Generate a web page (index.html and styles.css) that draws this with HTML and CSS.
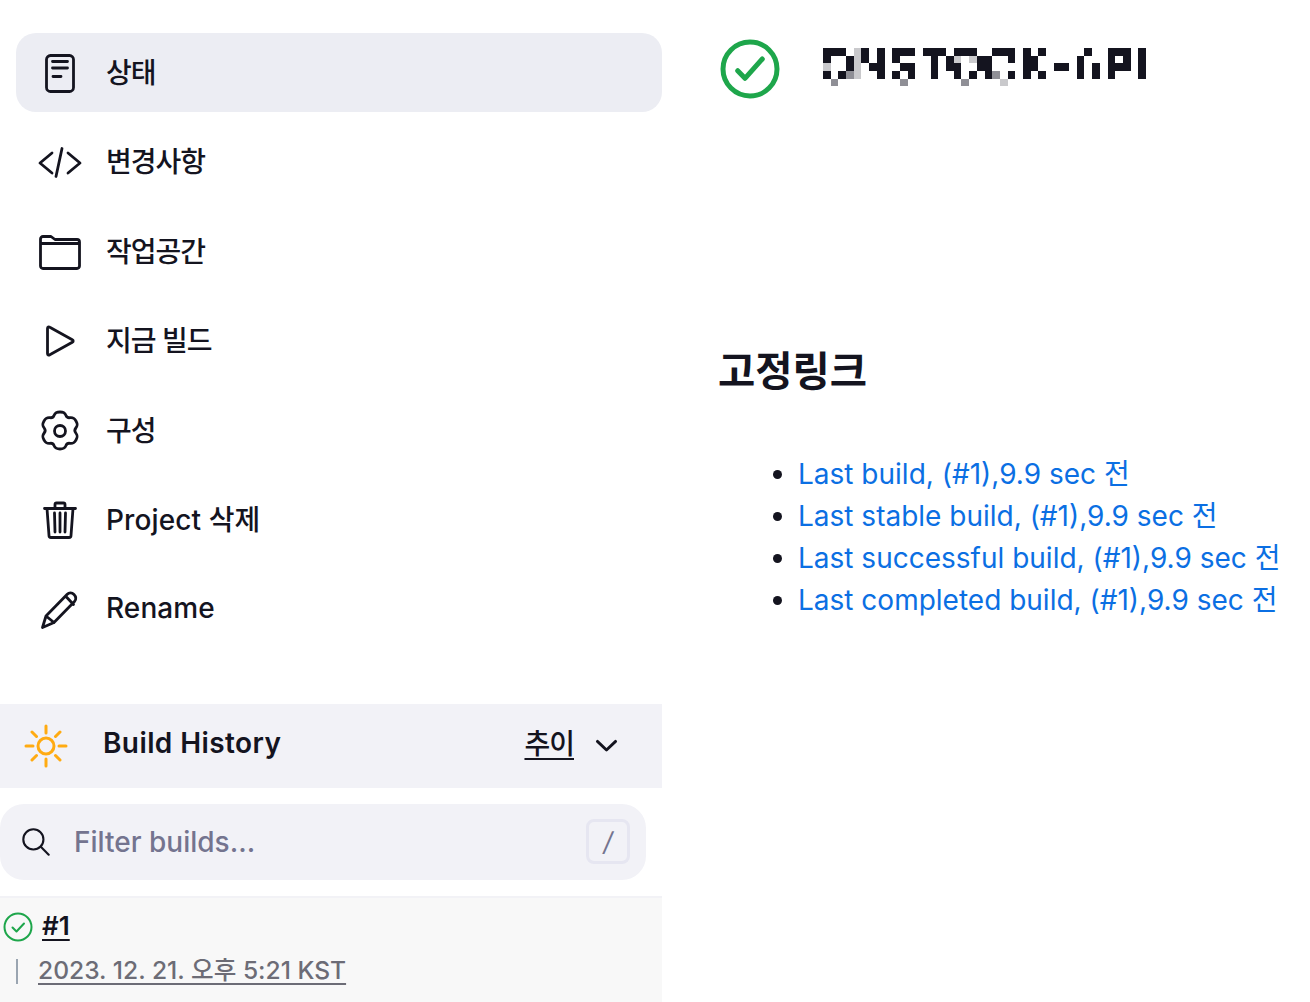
FILE: index.html
```html
<!DOCTYPE html>
<html lang="ko">
<head>
    <meta charset="UTF-8">
    <title>Project</title>
    <link rel="stylesheet" href="styles.css">
</head>
<body>
    <aside class="sidebar">
        <nav class="tasks">
            <a class="task task-ko task-active" href="#">
                <svg class="task-icon" viewBox="0 0 48 48"><rect x="10.500" y="6.500" width="27" height="36" rx="4"/><path d="M16.500 12.500h15M16.500 19h15M17 27.500h8"/></svg>
                <span>상태</span>
            </a>
            <a class="task task-ko" href="#">
                <svg class="task-icon" viewBox="0 0 48 48"><path d="M16 15 4 25l12 10M32 15l12 10-12 10M26 10.500 20 38.500"/></svg>
                <span>변경사항</span>
            </a>
            <a class="task task-ko" href="#">
                <svg class="task-icon" viewBox="0 0 48 48"><path d="M4.500 38V11a2.500 2.500 0 0 1 2.500-2.500h8l4 3h22a2.500 2.500 0 0 1 2.500 2.500v24a2.500 2.500 0 0 1-2.500 2.500H7A2.500 2.500 0 0 1 4.500 38ZM4.500 15.500h39"/></svg>
                <span>작업공간</span>
            </a>
            <a class="task task-ko" href="#">
                <svg class="task-icon" viewBox="0 0 48 48"><path d="M11.500 11.500c0-1.500 1.200-2 2.300-1.300l22.500 12.500c1.200.7 1.200 1.900 0 2.600L13.800 37.800c-1.100.7-2.300.2-2.300-1.300Z"/></svg>
                <span>지금 빌드</span>
            </a>
            <a class="task task-ko" href="#">
                <svg class="task-icon" viewBox="0 0 48 48"><path d="M18 8.500c1.500-3.500 3.500-3.500 6-3.500s4.500 0 6 3.500c.7 1.800 2 2.500 4 2.200 3.800-.5 4.800 1.300 6 3.400s2.300 3.800-.2 6.900c-1.200 1.500-1.200 3.500 0 5 2.500 3.100 1.400 4.800.2 6.900s-2.200 3.900-6 3.400c-2-.3-3.300.4-4 2.200-1.500 3.500-3.500 3.500-6 3.500s-4.500 0-6-3.500c-.7-1.800-2-2.500-4-2.200-3.800.5-4.800-1.300-6-3.400s-2.300-3.800.2-6.900c1.200-1.500 1.200-3.500 0-5-2.500-3.100-1.400-4.800-.2-6.900s2.200-3.900 6-3.400c2 .3 3.300-.4 4-2.200Z"/><circle cx="24" cy="24" r="5.500"/></svg>
                <span>구성</span>
            </a>
            <a class="task" href="#">
                <svg class="task-icon" viewBox="0 0 48 48"><path d="M8.500 12.500h31M19 12V8.500A1.500 1.500 0 0 1 20.500 7h7A1.500 1.500 0 0 1 29 8.500V12M11 12.500l2 27a2 2 0 0 0 2 2h18a2 2 0 0 0 2-2l2-27M18.500 17l.5 19M24 17v19M29.500 17l-.5 19"/></svg>
                <span>Project 삭제</span>
            </a>
            <a class="task" href="#">
                <svg class="task-icon" viewBox="0 0 48 48"><path d="M6.500 41.500 10 30 31 8.500c2-2 5-2 7 0s2.500 5 .5 7L18 36.500ZM29.500 10l8 8.500M10 30l8 6.500"/></svg>
                <span>Rename</span>
            </a>
        </nav>

        <section class="history">
            <header class="history-head">
                <svg class="sun" viewBox="0 0 48 48"><circle cx="24" cy="24" r="8"/><path d="M24 4v7M24 37v7M4 24h7M37 24h7M10 10l4.500 4.500M33.500 33.500 38 38M10 38l4.500-4.500M33.500 14.500 38 10"/></svg>
                <h3 class="history-title">Build History</h3>
                <a class="trend" href="#">추이</a>
                <svg class="chevron" viewBox="0 0 24 14"><path d="M2.500 2.500 12 11.500l9.500-9"/></svg>
            </header>

            <div class="search">
                <svg class="search-icon" viewBox="0 0 32 32"><circle cx="13" cy="13" r="11.500"/><path d="m21.500 21.500 9 9"/></svg>
                <span class="placeholder">Filter builds...</span>
                <kbd class="shortcut">/</kbd>
            </div>

            <div class="build">
                <div class="build-row">
                    <svg class="build-check" viewBox="0 0 30 30"><circle cx="15" cy="15" r="13.500"/><path d="m9.500 15.500 4 4 7.500-8"/></svg>
                    <a class="build-num" href="#">#1</a>
                </div>
                <div class="build-date-row">
                    <a class="build-date" href="#">2023. 12. 21. 오후 5:21 KST</a>
                </div>
            </div>
        </section>
    </aside>

    <main class="content">
        <header class="job-head">
            <svg class="job-status" viewBox="0 0 60 60"><circle cx="30" cy="30" r="27"/><path d="M17.700 31.700 25 39.300 42.300 20"/></svg>
            <!-- job name is blurred in the page, so it is a mosaic and not text -->
            <svg class="job-name" viewBox="0 0 42 5" role="img" aria-label="mosaic">
                <g class="px">
                    <rect x="0" y="0" width="3" height="1"/><rect x="5" y="0" width="1" height="2"/><rect x="7" y="0" width="1" height="4"/>
                    <rect x="0" y="1" width="1" height="1"/><rect x="3" y="1" width="1" height="2"/><rect x="6" y="2" width="1" height="1"/><rect x="0" y="3" width="1" height="1"/><rect x="2" y="3" width="1" height="1"/>
                    <rect x="9" y="0" width="3" height="1"/><rect x="9" y="1" width="1" height="1"/><rect x="10" y="2" width="2" height="1"/><rect x="9" y="3" width="1" height="1"/><rect x="11" y="3" width="1" height="1"/>
                    <rect x="13" y="0" width="3" height="1"/><rect x="14" y="1" width="1" height="3"/>
                    <rect x="17" y="0" width="3" height="1"/><rect x="16" y="1" width="1" height="2"/><rect x="17" y="2" width="1" height="2"/><rect x="19" y="3" width="1" height="1"/><rect x="20" y="1" width="1" height="2"/><rect x="21" y="1" width="1" height="3"/>
                    <rect x="22" y="0" width="3" height="1"/><rect x="24" y="1" width="1" height="1"/><rect x="24" y="3" width="1" height="1"/>
                    <rect x="26" y="0" width="1" height="4"/><rect x="28" y="0" width="1" height="1"/><rect x="27" y="1" width="1" height="2"/><rect x="28" y="3" width="1" height="1"/>
                    <rect x="30" y="2" width="2" height="1"/>
                    <rect x="34" y="0" width="1" height="1"/><rect x="33" y="1" width="1" height="3"/><rect x="35" y="2" width="1" height="2"/>
                    <rect x="37" y="0" width="3" height="1"/><rect x="37" y="1" width="1" height="3"/><rect x="39" y="1" width="1" height="1"/><rect x="38" y="2" width="2" height="1"/>
                    <rect x="41" y="0" width="1" height="4"/>
                </g>
                <g class="px-light">
                    <rect x="4" y="0" width="1" height="4"/><rect x="0" y="2" width="1" height="1"/><rect x="17" y="1" width="1" height="1"/><rect x="19" y="1" width="1" height="1"/><rect x="23" y="4" width="1" height="1"/>
                </g>
                <g class="px-mid">
                    <rect x="1" y="4" width="1" height="1"/><rect x="3" y="3" width="1" height="1"/><rect x="10" y="4" width="1" height="1"/><rect x="18" y="4" width="1" height="1"/><rect x="22" y="3" width="1" height="1"/>
                </g>
            </svg>
        </header>

        <h2 class="links-title">고정링크</h2>
        <ul class="links">
            <li><a href="#">Last build, (#1),9.9 sec 전</a></li>
            <li><a href="#">Last stable build, (#1),9.9 sec 전</a></li>
            <li><a href="#">Last successful build, (#1),9.9 sec 전</a></li>
            <li><a href="#">Last completed build, (#1),9.9 sec 전</a></li>
        </ul>
    </main>
</body>
</html>
```

FILE: styles.css
```css
html, body {
    height: 100%;
    overflow: hidden;
}
body {
    margin: 0;
    display: flex;
    font-family: Inter, "Noto Sans CJK KR", sans-serif;
    font-size: 28px;
    color: #14141f;
    background-color: #fff;
}
a {
    color: inherit;
    text-decoration: none;
}

/* sidebar */
.sidebar {
    width: 662px;
    flex-shrink: 0;
    padding-top: 33px;
}
.tasks {
    display: flex;
    flex-direction: column;
    gap: 10.500px;
    padding-left: 16px;
}
.task {
    height: 79px;
    display: flex;
    align-items: center;
    gap: 22px;
    padding-left: 20px;
    border-radius: 20px;
    font-weight: 450;
    letter-spacing: .1px;
}
.task span {
    padding-bottom: 4px;
}
.task-ko {
    letter-spacing: -1px;
}
.task-active {
    background-color: #ecedf3;
}
.task-icon {
    width: 48px;
    height: 48px;
    fill: none;
    stroke: #14141f;
    stroke-width: 2.800;
    stroke-linecap: round;
    stroke-linejoin: round;
}

/* build history */
.history {
    margin-top: 55px;
}
.history-head {
    height: 84px;
    display: flex;
    align-items: center;
    padding-left: 22px;
    background-color: #f2f2f7;
}
.sun {
    width: 48px;
    height: 48px;
    fill: none;
    stroke: #ffab12;
    stroke-width: 3;
    stroke-linecap: round;
}
.history-title {
    margin: 0 0 6px 33px;
    flex: 1;
    font-size: 28px;
    font-weight: 600;
    letter-spacing: .4px;
}
.trend {
    margin-bottom: 8px;
    font-weight: 500;
    letter-spacing: -1px;
    text-decoration: underline;
    text-underline-offset: 4px;
}
.chevron {
    width: 23px;
    height: 13.400px;
    margin: 0 44.500px 0 20.500px;
    fill: none;
    stroke: #14141f;
    stroke-width: 3;
    stroke-linecap: round;
    stroke-linejoin: round;
}
.search {
    width: 646px;
    height: 76px;
    margin-top: 16px;
    box-sizing: border-box;
    display: flex;
    align-items: center;
    padding: 0 16px 0 22px;
    border-radius: 24px;
    background-color: #f2f2f7;
}
.search-icon {
    width: 28px;
    height: 28px;
    fill: none;
    stroke: #14141f;
    stroke-width: 2.400;
    stroke-linecap: round;
}
.placeholder {
    flex: 1;
    margin-left: 24px;
    color: #74748f;
    font-weight: 450;
}
.shortcut {
    width: 44px;
    height: 45px;
    margin-bottom: 1px;
    box-sizing: border-box;
    display: flex;
    align-items: center;
    justify-content: center;
    border: 3px solid #e6e6f1;
    border-radius: 8px;
    color: #74748f;
    font-family: Inter, sans-serif;
    font-size: 26px;
    font-style: italic;
}
.build {
    margin-top: 16px;
    height: 110px;
    padding: 12px 0 0 3px;
    box-sizing: border-box;
    border-top: 2px solid #f2f2f6;
    background-color: #f8f8f8;
}
.build-row {
    display: flex;
    align-items: center;
    gap: 9px;
}
.build-check {
    width: 30px;
    height: 30px;
    fill: none;
    stroke: #1ea64b;
    stroke-width: 2;
    stroke-linecap: round;
    stroke-linejoin: round;
}
.build-num {
    margin-bottom: 3px;
    font-size: 26px;
    font-weight: 600;
    text-decoration: underline;
    text-underline-offset: 4px;
}
.build-date-row {
    height: 25px;
    margin: 15px 0 0 13px;
    padding-left: 20px;
    border-left: 2px solid #9aa5b1;
    line-height: 21px;
}
.build-date {
    font-size: 24.600px;
    font-weight: 500;
    color: #6c6c76;
    text-decoration: underline;
    text-underline-offset: 4px;
}

/* main */
.content {
    flex: 1;
    padding: 39px 0 0 56px;
    min-width: 0;
}
.job-head {
    display: flex;
    align-items: flex-start;
    gap: 43px;
    margin-left: 2px;
}
.job-status {
    width: 60px;
    height: 60px;
    fill: none;
    stroke: #1ea64b;
    stroke-width: 5;
    stroke-linecap: round;
    stroke-linejoin: round;
}
.job-name {
    width: 323px;
    height: 38.500px;
    margin-top: 9px;
    shape-rendering: crispEdges;
}
.px { fill: #14141f; }
.px-light { fill: #c9c9cc; }
.px-mid { fill: #8f8f96; }
.links-title {
    margin: 249px 0 0;
    font-size: 40.500px;
    line-height: 48px;
    font-weight: 700;
}
.links {
    margin: 57px 0 0;
    padding-left: 80px;
    line-height: 42px;
}
.links li {
    white-space: nowrap;
}
.links a {
    color: #0b6fe3;
}
```
